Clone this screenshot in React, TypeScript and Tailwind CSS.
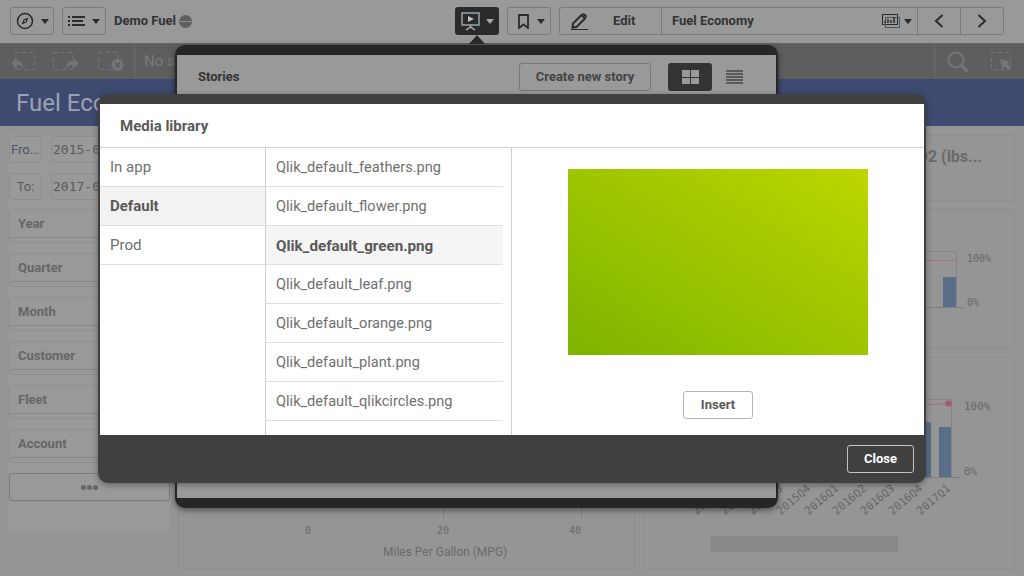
import React from "react";

const font = "font-['Roboto',sans-serif]";
const mono = "font-['DejaVu_Sans_Mono',monospace]";

function Caret({ className = "" }: { className?: string }) {
  return <span className={`inline-block w-0 h-0 border-l-[4px] border-r-[4px] border-t-[5px] border-l-transparent border-r-transparent ${className}`} />;
}

function Compass() {
  return (
    <svg width="18" height="18" viewBox="0 0 18 18" fill="none">
      <circle cx="9" cy="9" r="7.5" stroke="#2b2b2b" strokeWidth="1.6" />
      <path d="M12.5 5.5 L10.4 10.4 L5.5 12.5 L7.6 7.6 Z" fill="#2b2b2b" />
      <circle cx="9" cy="9" r="1" fill="#999" />
    </svg>
  );
}

function ListIcon() {
  return (
    <svg width="17" height="10" viewBox="0 0 17 10" fill="#2b2b2b">
      <rect x="0" y="0" width="2" height="2" /><rect x="4" y="0" width="13" height="2" />
      <rect x="0" y="4" width="2" height="2" /><rect x="4" y="4" width="11" height="2" />
      <rect x="0" y="8" width="2" height="2" /><rect x="4" y="8" width="13" height="2" />
    </svg>
  );
}

function DashedIcon({ kind }: { kind: "back" | "forward" | "clear" | "select" }) {
  return (
    <svg width="26" height="22" viewBox="0 0 26 22" fill="none" className="overflow-visible">
      <rect x="2.5" y="1.5" width="19" height="17" stroke="#757575" strokeDasharray="4 3" />
      {kind === "back" && <path d="M-2 12 L4 7 V10 C8 10 10 13 10.500 19 C9 15 7 14 4 14 V18 Z" fill="#757575" />}
      {kind === "forward" && <path d="M28 12 L22 7 V10 C18 10 15 13 14 19 C16 15 18 14 22 14 V18 Z" fill="#757575" />}
      {kind === "clear" && <><circle cx="21.500" cy="14" r="6" fill="#757575" /><path d="M19 11.500 L24 16.500 M24 11.500 L19 16.500" stroke="#5c5c5c" strokeWidth="1.500" /></>}
      {kind === "select" && <path d="M11 8 L21 10.500 L18.500 13 L22 16.500 L19.500 19 L16 15.500 L13.500 18 Z" fill="#757575" />}
    </svg>
  );
}

function Filter({ label }: { label: string }) {
  return (
    <div className="h-[34px] mb-[10px] rounded-[3px] border border-[#8f8f8f]">
      <div className="h-[28px] border-b border-[#868686] pl-2 flex items-center text-[13px] font-bold text-[#666666]">{label}</div>
    </div>
  );
}

const quarters = ["2015Q1", "2015Q2", "2015Q3", "2015Q4", "2016Q1", "2016Q2", "2016Q3", "2016Q4", "2017Q1"];

function Background() {
  return (
    <div className="w-[1024px] h-[576px] flex flex-col bg-[#959595] overflow-hidden">
      <header className="h-[43px] shrink-0 bg-[#999999] flex items-center pl-[10px] pr-[20px] pb-[1px]">
        <button className="w-[44px] h-[28px] rounded-[3px] border border-[#7a7a7a] flex items-center justify-center gap-[7px]">
          <Compass /><Caret className="border-t-[#2b2b2b]" />
        </button>
        <button className="w-[44px] h-[28px] ml-[8px] rounded-[3px] border border-[#7a7a7a] flex items-center justify-center gap-[7px]">
          <ListIcon /><Caret className="border-t-[#2b2b2b]" />
        </button>
        <span className="ml-[8px] text-[13px] font-bold text-[#333]">Demo Fuel</span>
        <svg width="13" height="13" viewBox="0 0 13 13" className="ml-[3px]">
          <circle cx="6.500" cy="6.500" r="6.500" fill="#5f5f5f" />
          <path d="M1 6.500 H12" stroke="#a0a0a0" strokeDasharray="2 1" />
        </svg>
        <div className="flex-1" />
        <div className="w-[44px] h-[28px] rounded-[3px] bg-[#2b2b2b] flex items-center justify-center gap-[5px] relative">
          <svg width="20" height="19" viewBox="0 0 20 19" fill="none">
            <rect x="1" y="1" width="17" height="12" stroke="#9aa5ae" strokeWidth="1.500" />
            <path d="M7 4 L13 7 L7 10 Z" fill="#c0c0c0" />
            <path d="M9.500 13 V15 M5 18 L9.500 15 L14 18" stroke="#b5b5b5" strokeWidth="1.500" />
          </svg>
          <Caret className="border-t-[#a8a8a8]" />
          <span className="absolute left-[14px] top-[28px] w-0 h-0 border-l-[8px] border-r-[8px] border-b-[9px] border-l-transparent border-r-transparent border-b-[#2b2b2b]" />
        </div>
        <button className="w-[44px] h-[28px] ml-[8px] rounded-[3px] border border-[#7a7a7a] flex items-center pl-[10px] gap-[8px]">
          <svg width="11" height="15" viewBox="0 0 11 15" fill="none"><path d="M1 1 H10 V14 L5.500 10.500 L1 14 Z" stroke="#2b2b2b" strokeWidth="1.800" /></svg>
          <Caret className="border-t-[#2b2b2b]" />
        </button>
        <div className="w-[445px] h-[28px] ml-[8px] rounded-[3px] border border-[#7a7a7a] flex items-center">
          <div className="w-[102px] h-full border-r border-[#7a7a7a] flex items-center pl-[11px] gap-[25px]">
            <svg width="17" height="17" viewBox="0 0 17 17" fill="none">
              <path d="M2 10.500 L10.500 2 L14 5.500 L5.500 14 L1.500 14.500 Z" stroke="#2b2b2b" strokeWidth="2" />
              <path d="M11 1 L13 0 L16 3 L15 5 Z" fill="#2b2b2b" />
              <path d="M0 16.500 H17" stroke="#2b2b2b" />
            </svg>
            <span className="text-[13px] font-bold text-[#333]">Edit</span>
          </div>
          <div className="flex-1 h-full flex items-center pl-[10px] text-[13px] font-bold text-[#333]">Fuel Economy</div>
          <svg width="18" height="14" viewBox="0 0 18 14" fill="none" className="mr-[4px]">
            <rect x="0.500" y="0.500" width="15" height="10" stroke="#2b2b2b" />
            <rect x="3.500" y="3.500" width="14" height="10" stroke="#4a5563" />
            <path d="M3 9 V7 M6 9 V5 M9 9 V6 M12 9 V3" stroke="#2b2b2b" strokeWidth="1.500" />
          </svg>
          <Caret className="border-t-[#2b2b2b] mr-[5px]" />
          <div className="w-[43px] h-full border-l border-[#7a7a7a] flex items-center justify-center">
            <svg width="10" height="14" viewBox="0 0 10 14" fill="none"><path d="M8.500 1 L2 7 L8.500 13" stroke="#2b2b2b" strokeWidth="2" /></svg>
          </div>
          <div className="w-[43px] h-full border-l border-[#7a7a7a] flex items-center justify-center">
            <svg width="10" height="14" viewBox="0 0 10 14" fill="none"><path d="M1.500 1 L8 7 L1.500 13" stroke="#2b2b2b" strokeWidth="2" /></svg>
          </div>
        </div>
      </header>
      <div className="h-[36px] shrink-0 bg-[#5e5e5e] flex items-center border-t border-[#666]">
        <div className="w-[135px] h-full border-r border-[#6b6b6b] flex items-center pl-[13px] gap-[12px]">
          <DashedIcon kind="back" /><DashedIcon kind="forward" /><span className="ml-[7px]"><DashedIcon kind="clear" /></span>
        </div>
        <span className="ml-[9px] text-[15px] text-[#7a7a7a]">No selections applied</span>
        <div className="flex-1" />
        <div className="w-[90px] h-full border-l border-[#6b6b6b] flex items-center pl-[12px] gap-[20px]">
          <svg width="22" height="22" viewBox="0 0 22 22" fill="none"><circle cx="9" cy="9" r="7.500" stroke="#757575" strokeWidth="2" /><path d="M14 14 L20.500 20.500" stroke="#757575" strokeWidth="3" /></svg>
          <DashedIcon kind="select" />
        </div>
      </div>
      <div className="h-[47px] shrink-0 bg-[#3f4a70] pl-[16px] flex items-center text-[24px] text-[#9ca2b4]">Fuel Economy</div>
      <main className="flex-1 flex pl-[9px] pt-[9px]">
        <aside className="w-[161px] h-[397px] rounded-[3px] bg-[#999999] pt-[1px]">
          <div className="flex gap-[9px] mb-[10px]">
            <div className="w-[33px] h-[27px] rounded-[3px] border border-[#8e8e8e] flex items-center justify-center text-[13px] text-[#4a5563]">Fro...</div>
            <div className={`flex-1 h-[27px] rounded-[3px] border border-[#8e8e8e] pl-[1px] leading-[25px] text-[13px] text-[#5a5a5a] ${mono}`}>2015-01-01</div>
          </div>
          <div className="flex gap-[9px] mb-[9px]">
            <div className="w-[33px] h-[27px] rounded-[3px] border border-[#8e8e8e] flex items-center justify-center text-[13px] text-[#5a5a5a]">To:</div>
            <div className={`flex-1 h-[27px] rounded-[3px] border border-[#8e8e8e] pl-[1px] leading-[25px] text-[13px] text-[#5a5a5a] ${mono}`}>2017-01-01</div>
          </div>
          {["Year", "Quarter", "Month", "Customer", "Fleet", "Account"].map((f) => <Filter key={f} label={f} />)}
          <div className="h-[28px] rounded-[3px] border border-[#7a7a7a] flex items-center justify-center gap-[1px]">
            {[0, 1, 2].map((i) => <span key={i} className="w-[5px] h-[5px] rounded-full bg-[#666]" />)}
          </div>
        </aside>
        <section className="ml-[8px] w-[457px] h-[434px] border border-[#8e8e8e] relative">
          <div className="absolute left-[264px] top-[372px] w-px h-[10px] bg-[#808080]" />
          <div className="absolute left-[402px] top-[372px] w-px h-[10px] bg-[#808080]" />
          <div className={`absolute left-[126px] top-[387px] text-[10px] text-[#666] ${mono}`}>0</div>
          <div className={`absolute left-[258px] top-[387px] text-[10px] text-[#666] ${mono}`}>20</div>
          <div className={`absolute left-[390px] top-[387px] text-[10px] text-[#666] ${mono}`}>40</div>
          <div className="absolute left-[204px] top-[407px] whitespace-nowrap text-[12px] text-[#6a6a6a]">Miles Per Gallon (MPG)</div>
        </section>
        <section className="ml-[9px] w-[371px] flex flex-col">
          <div className="h-[66px] border border-[#8e8e8e] text-right pr-[32px] pt-[9px] text-[16px] font-bold text-[#6a6a6a]">CO2 (lbs...</div>
          <div className="h-[139px] mt-[8px] border border-[#8e8e8e] relative">
            <svg width="369" height="137" viewBox="0 0 369 137" fill="none" className="absolute left-0 top-0">
              <path d="M250 41.500 H311.500 V97.500" stroke="#858585" />
              <path d="M250 97.500 H319" stroke="#7d7d7d" />
              <path d="M250 50.500 H311" stroke="#a8707c" />
              <rect x="298" y="67" width="13" height="30" fill="#5a6f87" />
            </svg>
            <span className={`absolute left-[322px] top-[41px] text-[10px] text-[#666] ${mono}`}>100%</span>
            <span className={`absolute left-[322px] top-[85px] text-[10px] text-[#666] ${mono}`}>0%</span>
          </div>
          <div className="h-[212px] mt-[9px] border border-[#8e8e8e] relative">
            <svg width="369" height="210" viewBox="0 0 369 210" fill="none" className="absolute left-0 top-0">
              <path d="M250 41.500 H306.500 V119.500" stroke="#858585" />
              <path d="M250 119.500 H315" stroke="#7d7d7d" />
              <path d="M270 47.500 L303 45.500" stroke="#a8707c" />
              <circle cx="303.500" cy="45.500" r="3" fill="#a8596a" />
              <rect x="273" y="64" width="13" height="55" fill="#5a6f87" />
              <rect x="294" y="69" width="12" height="50" fill="#5a6f87" />
            </svg>
            <span className={`absolute left-[319px] top-[41px] text-[11px] text-[#666] ${mono}`}>100%</span>
            <span className={`absolute left-[319px] top-[106px] text-[11px] text-[#666] ${mono}`}>0%</span>
            <div className="absolute left-[66px] top-[178px] w-[187px] h-[16px] bg-[#888]" />
            {quarters.map((q, i) => (
              <span key={q} className={`absolute w-[40px] text-[11px] leading-[12px] text-[#666] -rotate-[40deg] ${mono}`} style={{ left: 45 + i * 28, top: 136 }}>{q}</span>
            ))}
          </div>
        </section>
      </main>
    </div>
  );
}

function Stories() {
  return (
    <div className="absolute left-[175px] top-[45px] w-[603px] h-[463px] rounded-[10px] bg-[#262626] pt-[10px] px-[2px] shadow-[0_2px_6px_rgba(0,0,0,0.5)]">
      <div className="h-[443px] bg-[#999999] pl-[21px] pr-[33px] pt-[8px] flex items-start">
        <span className="mt-[6px] text-[13px] font-bold text-[#333] leading-[16px]">Stories</span>
        <div className="flex-1" />
        <div className="w-[132px] h-[28px] rounded-[3px] border border-[#777] flex items-center justify-center text-[13px] font-bold text-[#444]">Create new story</div>
        <div className="ml-[17px] w-[44px] h-[28px] rounded-[3px] bg-[#333] grid place-items-center">
          <div className="grid grid-cols-2 gap-[1px] w-[17px] h-[14px]">
            {[0, 1, 2, 3].map((i) => <span key={i} className="bg-[#999]" />)}
          </div>
        </div>
        <div className="ml-[14px] w-[17px] h-[28px] flex flex-col justify-center gap-[1px]">
          {[0, 1, 2, 3, 4].map((i) => <span key={i} className="h-[2px] bg-[#5a5a5a]" />)}
        </div>
      </div>
    </div>
  );
}

const cats = ["In app", "Default", "Prod"];
const files = ["feathers", "flower", "green", "leaf", "orange", "plant", "qlikcircles"];

function Media() {
  return (
    <div className="absolute left-[98px] top-[94px] w-[828px] h-[389px] rounded-[10px] bg-[#404040] flex flex-col overflow-hidden pt-[10px] shadow-[0_2px_6px_rgba(0,0,0,0.35)]">
      <div className="mx-[2px] flex-1 bg-white flex flex-col min-h-0">
        <div className="h-[44px] shrink-0 border-b border-[#cfcfcf] pl-[20px] pt-[2px] flex items-center text-[15px] font-bold text-[#595959]">Media library</div>
        <div className="flex-1 flex min-h-0">
          <div className="w-[166px] border-r border-[#cfcfcf]">
            {cats.map((c) => (
              <div key={c} className={`h-[39px] pl-[10px] flex items-center border-b border-[#dedede] text-[15px] ${c === "Default" ? "bg-[#f2f2f2] font-bold text-[#595959]" : "text-[#707070]"}`}>{c}</div>
            ))}
          </div>
          <div className="w-[246px] border-r border-[#cfcfcf] pr-[8px]">
            {files.map((f) => (
              <div key={f} className={`h-[39px] pl-[10px] pt-[2px] flex items-center border-b border-[#dedede] ${f === "green" ? "bg-[#f5f5f5] font-bold text-[15.2px] text-[#595959]" : "text-[14.6px] text-[#707070]"}`}>Qlik_default_{f}.png</div>
            ))}
          </div>
          <div className="flex-1 flex flex-col items-center pt-[21px]">
            <div className="w-[300px] h-[186px] bg-[linear-gradient(to_bottom_left,#bcd600,#7eb400)]" />
            <button className="mt-[36px] w-[70px] h-[28px] rounded-[3px] border border-[#b5b5b5] text-[13px] font-bold text-[#595959]">Insert</button>
          </div>
        </div>
      </div>
      <div className="h-[48px] shrink-0 flex items-center justify-end pr-[12px]">
        <button className="w-[67px] h-[28px] rounded-[3px] border border-[#c4c4c4] text-[13px] font-bold text-white">Close</button>
      </div>
    </div>
  );
}

export default function App() {
  return (
    <div className={`relative w-[1024px] h-[576px] overflow-hidden ${font}`}>
      <Background />
      <Stories />
      <Media />
    </div>
  );
}
